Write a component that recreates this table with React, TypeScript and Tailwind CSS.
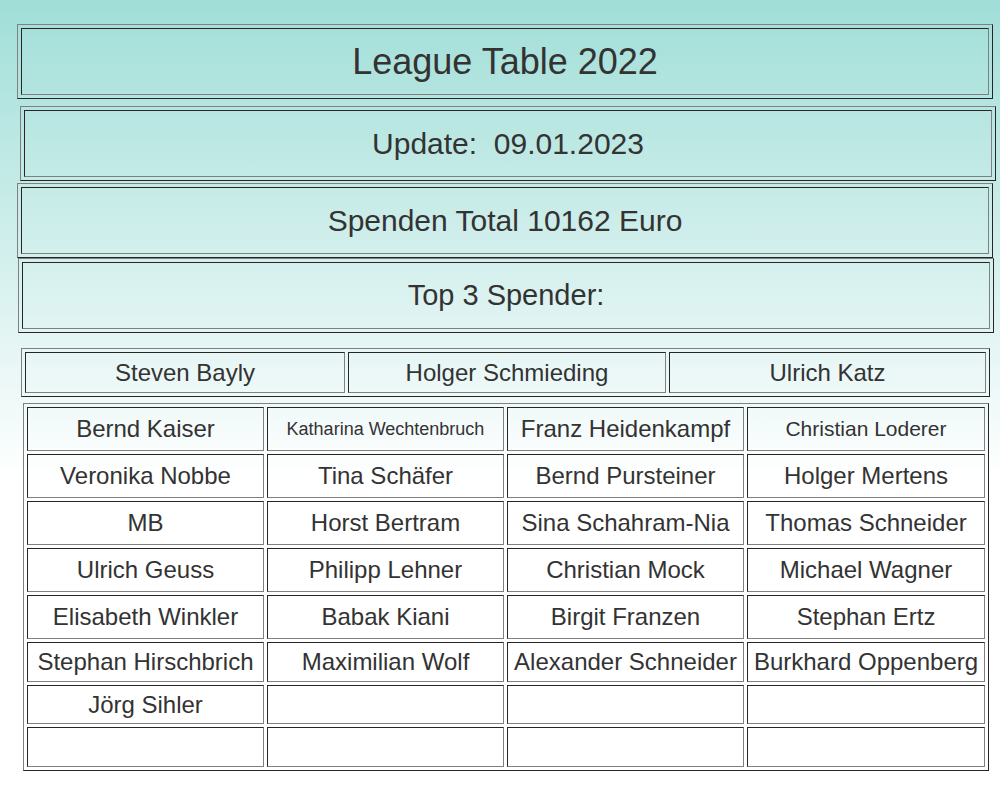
import React from "react";

const outer =
  "border border-t-[#808080] border-l-[#808080] border-b-[#262626] border-r-[#262626] p-[3px]";
const inner =
  "border border-t-[#262626] border-l-[#262626] border-b-[#808080] border-r-[#808080] flex items-center justify-center whitespace-nowrap";

type Cell = { t: string; s?: string };

const rows: Cell[][] = [
  [{ t: "Bernd Kaiser" }, { t: "Katharina Wechtenbruch", s: "text-[18px]" }, { t: "Franz Heidenkampf" }, { t: "Christian Loderer", s: "text-[21px]" }],
  [{ t: "Veronika Nobbe" }, { t: "Tina Schäfer" }, { t: "Bernd Pursteiner" }, { t: "Holger Mertens" }],
  [{ t: "MB" }, { t: "Horst Bertram" }, { t: "Sina Schahram-Nia" }, { t: "Thomas Schneider" }],
  [{ t: "Ulrich Geuss" }, { t: "Philipp Lehner" }, { t: "Christian Mock" }, { t: "Michael Wagner" }],
  [{ t: "Elisabeth Winkler" }, { t: "Babak Kiani" }, { t: "Birgit Franzen" }, { t: "Stephan Ertz" }],
  [{ t: "Stephan Hirschbrich" }, { t: "Maximilian Wolf" }, { t: "Alexander Schneider" }, { t: "Burkhard Oppenberg" }],
  [{ t: "Jörg Sihler" }, { t: "" }, { t: "" }, { t: "" }],
  [{ t: "" }, { t: "" }, { t: "" }, { t: "" }],
];

function HeaderBox({ ml, mt, size, children }: { ml: string; mt: string; size: string; children: React.ReactNode }) {
  return (
    <div className={`${outer} ${ml} ${mt} w-[976px] h-[75px] flex`}>
      <div className={`${inner} ${size} flex-1`}>{children}</div>
    </div>
  );
}

export default function App() {
  return (
    <div
      className="min-h-[788px] w-full bg-[linear-gradient(to_bottom,#a1ded8_0px,#ffffff_480px)] text-[#333333] pt-[24px] pb-[17px] flex flex-col"
      style={{ fontFamily: '"Liberation Sans", Arial, sans-serif' }}
    >
      <HeaderBox ml="ml-[17px]" mt="mt-0" size="text-[36px]">League Table 2022</HeaderBox>
      <HeaderBox ml="ml-[20px]" mt="mt-[7px]" size="text-[30px]">{"Update:\u00a0 09.01.2023"}</HeaderBox>
      <HeaderBox ml="ml-[17px]" mt="mt-[2px]" size="text-[30px]">Spenden Total 10162 Euro</HeaderBox>
      <HeaderBox ml="ml-[18px]" mt="mt-0" size="text-[29px]">Top 3 Spender:</HeaderBox>

      <div className={`${outer} ml-[21px] mt-[15px] w-[969px] h-[49px] grid grid-cols-[320px_318px_317px] gap-[3px]`}>
        <div className={`${inner} text-[24px]`}>Steven Bayly</div>
        <div className={`${inner} text-[24px]`}>Holger Schmieding</div>
        <div className={`${inner} text-[24px]`}>Ulrich Katz</div>
      </div>

      <div
        className={`${outer} ml-[23px] mt-[6px] w-[966px] h-[368px] grid grid-cols-[237px_237px_237px_238px] grid-rows-[44px_44px_44px_44px_44px_40px_39px_40px] gap-[3px]`}
      >
        {rows.map((r, i) =>
          r.map((c, j) => (
            <div key={`${i}-${j}`} className={`${inner} ${c.s ?? "text-[24px]"}`}>
              {c.t}
            </div>
          ))
        )}
      </div>
    </div>
  );
}
